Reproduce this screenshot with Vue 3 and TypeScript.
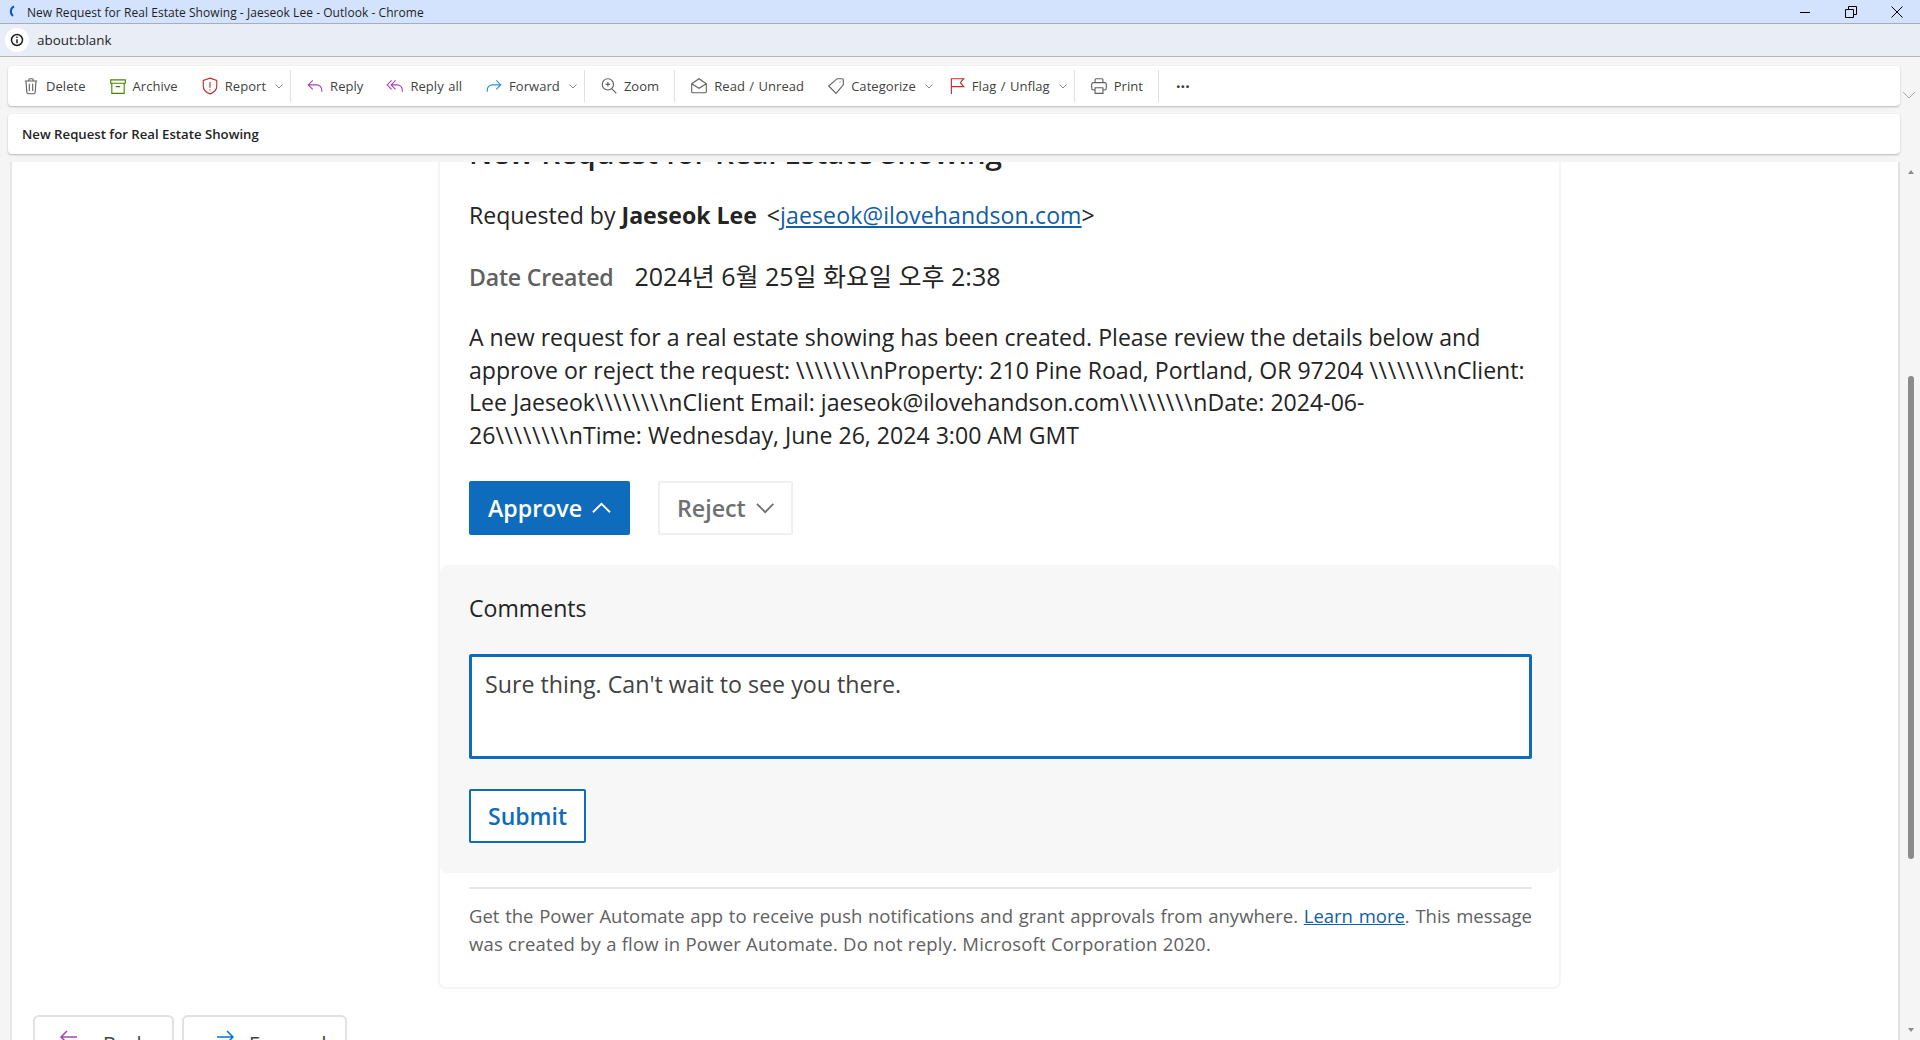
<script setup lang="ts">
import { ref } from 'vue'

interface ToolItem {
  label: string
  icon: string
  tone: string
  menu?: boolean
  sep?: boolean
}

const icons: Record<string, string> = {
  trash: 'M2.5 3.5h11M6 3.5v-1a1 1 0 0 1 1-1h2a1 1 0 0 1 1 1v1M3.5 3.5l.8 10a1.5 1.5 0 0 0 1.5 1.4h4.4a1.5 1.5 0 0 0 1.5-1.4l.8-10M6.5 6v6.5M9.5 6v6.5',
  archive: 'M1.5 2.5h13v3h-13zM2.5 5.5v9h11v-9M6 8.5h4',
  shield: 'M8 1l6 2v5c0 3.5-3 6-6 7-3-1-6-3.500-6-7V3zM8 4.500v5M8 11v1',
  reply: 'M6 3L2 7l4 4M2 7h7.500A4.500 4.500 0 0 1 14 11.500V13',
  replyAll: 'M5 3L1 7l4 4M8.500 3l-4 4 4 4M4.500 7H10a4.500 4.500 0 0 1 4.500 4.500V13',
  forward: 'M10 3l4 4-4 4M14 7H6.500A4.500 4.500 0 0 0 2 11.500V13',
  zoom: 'M7 1.500a5 5 0 1 0 0 10 5 5 0 0 0 0-10zM10.600 10.600l3.900 3.900M7 4.500v4M5 6.500h4',
  read: 'M1.500 6L8 1.500 14.500 6v7a1 1 0 0 1-1 1h-11a1 1 0 0 1-1-1zM1.500 6L8 10l6.500-4',
  tag: 'M9 1.500h4.500a1 1 0 0 1 1 1V7L8 14.500 1.500 8zM11.500 4.200v.6',
  flag: 'M3 15V1.500h11L11 5l3 3.500H3',
  print: 'M4.500 5V2.500a1 1 0 0 1 1-1h5a1 1 0 0 1 1 1V5M4.500 11.500H3A1.500 1.500 0 0 1 1.500 10V6.500A1.500 1.500 0 0 1 3 5h10a1.500 1.500 0 0 1 1.500 1.500V10a1.500 1.500 0 0 1-1.500 1.500h-1.500M4.500 9.500h7v5h-7z',
}

const tools: ToolItem[] = [
  { label: 'Delete', icon: 'trash', tone: 'grey' },
  { label: 'Archive', icon: 'archive', tone: 'green' },
  { label: 'Report', icon: 'shield', tone: 'red', menu: true, sep: true },
  { label: 'Reply', icon: 'reply', tone: 'purple' },
  { label: 'Reply all', icon: 'replyAll', tone: 'purple' },
  { label: 'Forward', icon: 'forward', tone: 'blue', menu: true, sep: true },
  { label: 'Zoom', icon: 'zoom', tone: 'grey', sep: true },
  { label: 'Read / Unread', icon: 'read', tone: 'grey' },
  { label: 'Categorize', icon: 'tag', tone: 'grey', menu: true },
  { label: 'Flag / Unflag', icon: 'flag', tone: 'red', menu: true, sep: true },
  { label: 'Print', icon: 'print', tone: 'grey', sep: true },
]

const slashes = '\\\\\\\\\\\\\\\\'
const comment = ref("Sure thing. Can't wait to see you there.")
</script>

<template>
  <div class="window">
    <header class="titlebar">
      <svg class="spinner" width="10" height="14" viewBox="0 0 10 14"><path d="M7 1.500C3.500 3 2.500 8 6 11" /></svg>
      <span class="title">New Request for Real Estate Showing - Jaeseok Lee - Outlook - Chrome</span>
      <div class="win-buttons">
        <svg width="14" height="14" viewBox="0 0 14 14"><path d="M2 7.500h10" /></svg>
        <svg width="14" height="14" viewBox="0 0 14 14"><path d="M1.500 4.500h8v8h-8zM4.500 4.500v-3h8v8h-3" /></svg>
        <svg width="14" height="14" viewBox="0 0 14 14"><path d="M1.500 1.500l11 11M12.500 1.500l-11 11" /></svg>
      </div>
    </header>

    <div class="addressbar">
      <span class="info">
        <svg width="14" height="14" viewBox="0 0 14 14"><circle cx="7" cy="7" r="5.500" /><path d="M7 6.200v4M7 3.600v1.400" /></svg>
      </span>
      <span class="url">about:blank</span>
    </div>

    <main class="app">
      <div class="bar-row">
        <nav class="card toolbar">
          <template v-for="tool in tools" :key="tool.label">
            <div class="tool">
              <svg :class="['tool-icon', tool.tone]" width="18" height="18" viewBox="0 0 16 16"><path :d="icons[tool.icon]" /></svg>
              <span>{{ tool.label }}</span>
              <svg v-if="tool.menu" class="caret" width="8" height="8" viewBox="0 0 8 8"><path d="M.5 2.500L4 6l3.500-3.500" /></svg>
            </div>
            <i v-if="tool.sep" class="sep"></i>
          </template>
          <div class="more">···</div>
        </nav>
        <svg class="bar-caret" width="14" height="8" viewBox="0 0 14 8"><path d="M1 1l6 6 6-6" /></svg>
      </div>

      <div class="card subject">New Request for Real Estate Showing</div>

      <div class="reading">
        <div class="pane">
          <article class="mail">
            <section class="mail-body">
              <h1>New Request for Real Estate Showing</h1>
              <p class="line">Requested by <b>Jaeseok Lee</b> &lt;<a href="#">jaeseok@ilovehandson.com</a>&gt;</p>
              <p class="line date-line"><b class="muted">Date Created</b><span class="date">2024년 6월 25일 화요일 오후 2:38</span></p>
              <p class="desc">A new request for a real estate showing has been created. Please review the details below and approve or reject the request: <span class="bs">{{ slashes }}</span>nProperty: 210 Pine Road, Portland, OR 97204 <span class="bs">{{ slashes }}</span>nClient: Lee Jaeseok<span class="bs">{{ slashes }}</span>nClient Email: jaeseok@ilovehandson.com<span class="bs">{{ slashes }}</span>nDate: 2024-06-<br />26<span class="bs">{{ slashes }}</span>nTime: Wednesday, June 26, 2024 3:00 AM GMT</p>
              <div class="actions">
                <button class="btn primary">
                  Approve
                  <svg width="20" height="12" viewBox="0 0 20 12"><path d="M1 10.500l9-9 9 9" /></svg>
                </button>
                <button class="btn ghost">
                  Reject
                  <svg width="20" height="12" viewBox="0 0 20 12"><path d="M1 1.500l9 9 9-9" /></svg>
                </button>
              </div>
            </section>

            <section class="panel">
              <label for="comment">Comments</label>
              <textarea id="comment" v-model="comment" rows="2"></textarea>
              <button class="btn submit">Submit</button>
            </section>

            <footer class="mail-foot">
              Get the Power Automate app to receive push notifications and grant approvals from anywhere. <a href="#">Learn more</a>. This message <span class="foot-tail">was created by a flow in Power Automate. Do not reply. Microsoft Corporation 2020.</span>
            </footer>
          </article>

          <div class="nav-buttons">
            <button class="nav-btn back">
              <svg width="20" height="16" viewBox="0 0 20 16"><path d="M8 1L2 7l6 6M2 7h16" /></svg>
              Back
            </button>
            <button class="nav-btn fwd">
              <svg width="20" height="16" viewBox="0 0 20 16"><path d="M12 1l6 6-6 6M18 7H2" /></svg>
              Forward
            </button>
          </div>
        </div>

        <div class="scrollbar">
          <i class="arrow up"></i>
          <i class="thumb"></i>
          <i class="arrow down"></i>
        </div>
      </div>
    </main>
  </div>
</template>

<style>
html,
body {
  margin: 0;
  overflow: hidden;
}
</style>

<style scoped>
.window {
  display: flex;
  flex-direction: column;
  height: 1040px;
  overflow: hidden;
  font-family: 'Open Sans', 'Noto Sans CJK KR', sans-serif;
  color: #242424;
}

.titlebar {
  flex: none;
  display: flex;
  align-items: center;
  height: 22px;
  padding: 1px 0 0 7px;
  background: #d3e3fd;
  border-bottom: 1px solid #a8adb6;
  font-size: 12px;
  color: #1f1f1f;
}
.spinner {
  fill: none;
  stroke: #0b57d0;
  stroke-width: 2;
}
.title {
  margin-left: 10px;
  letter-spacing: 0.05px;
}
.win-buttons {
  margin-left: auto;
  display: flex;
  gap: 32px;
  padding-right: 16px;
}
.win-buttons svg {
  fill: none;
  stroke: #000;
}

.addressbar {
  flex: none;
  display: flex;
  align-items: center;
  height: 32px;
  padding-left: 5px;
  background: #e9edf6;
  border-bottom: 1px solid #b4b6ba;
  font-size: 13.400px;
  color: #1f1f1f;
}
.info {
  display: flex;
  align-items: center;
  justify-content: center;
  width: 24px;
  height: 24px;
  border-radius: 50%;
  background: #fff;
}
.info svg {
  fill: none;
  stroke: #1f1f1f;
  stroke-width: 1.500;
}
.url {
  margin-left: 8px;
}

.app {
  flex: 1;
  min-height: 0;
  display: flex;
  flex-direction: column;
  padding-top: 9px;
  background: #f5f5f5;
}
.card {
  background: #fff;
  border-radius: 4px;
  box-shadow: 0 1px 2px rgba(0, 0, 0, 0.25);
}
.bar-row {
  flex: none;
  display: flex;
  align-items: center;
  padding-left: 8px;
}
.toolbar {
  display: flex;
  align-items: center;
  width: 1892px;
  height: 40px;
  box-sizing: border-box;
  padding-left: 3px;
  font-size: 13px;
  letter-spacing: 0.05px;
  word-spacing: 1px;
  color: #424242;
}
.bar-caret {
  margin: 18px 0 0 2px;
  fill: none;
  stroke: #a6a6a6;
}
.tool {
  display: flex;
  align-items: center;
  gap: 6px;
  padding: 0 12px 0 11px;
  white-space: nowrap;
}
.tool-icon {
  fill: none;
  stroke-width: 1;
}
.grey { stroke: #616161; }
.green { stroke: #498205; }
.red { stroke: #bc2f32; }
.purple { stroke: #a347b5; }
.blue { stroke: #2c8fe0; }
.caret {
  margin-left: 3px;
  margin-right: -8px;
  fill: none;
  stroke: #8a8a8a;
}
.sep {
  width: 1px;
  height: 32px;
  margin: 0 4px 0 3px;
  background: #e0e0e0;
}
.more {
  padding-left: 13px;
  font-size: 16px;
  font-weight: 700;
}
.subject {
  flex: none;
  width: 1892px;
  height: 40px;
  box-sizing: border-box;
  margin: 8px 0 8px 8px;
  padding-left: 14px;
  font-size: 13.200px;
  font-weight: 600;
  line-height: 40px;
  color: #242424;
}

.reading {
  flex: 1;
  min-height: 0;
  display: flex;
  padding-left: 10px;
}
.pane {
  flex: 1;
  min-width: 0;
  overflow: hidden;
  background: #fff;
  border-left: 2px solid #e6e6e6;
  border-right: 2px solid #e2e2e2;
}
.mail {
  width: 1123px;
  box-sizing: border-box;
  margin: -32px 0 0 426px;
  background: #fff;
  border: 2px solid #f5f5f5;
  border-radius: 8px;
}
.mail-body {
  padding: 0 27px 30px 29px;
  font-size: 23.100px;
  color: #242424;
}
h1 {
  margin: 0 0 25px;
  font-size: 29.700px;
  font-weight: 600;
  line-height: 42px;
}
.line {
  margin: 0 0 29px;
  line-height: 33px;
}
.line a {
  letter-spacing: 0.1px;
}
.date-line {
  margin-bottom: 27px;
}
.muted {
  color: #616161;
  font-weight: 600;
}
.line b {
  font-weight: 700;
  margin-right: 4px;
}
.line .muted {
  font-weight: 600;
  margin-right: 0;
  letter-spacing: -0.2px;
}
.date {
  margin-left: 21px;
  font-size: 25px;
  line-height: 1;
}
.desc {
  margin: 0 0 29px;
  line-height: 32.700px;
}
.bs {
  letter-spacing: 0.7px;
}
a {
  color: #115ea3;
}
.actions {
  display: flex;
  gap: 28px;
}
.btn {
  display: inline-flex;
  align-items: center;
  gap: 10px;
  height: 54px;
  box-sizing: border-box;
  padding: 0 19px;
  border-radius: 2px;
  font-family: inherit;
  font-size: 23.200px;
  font-weight: 600;
}
.btn svg {
  fill: none;
  stroke: currentColor;
  stroke-width: 2;
}
.primary {
  width: 161px;
  border: none;
  background: #0f6cbd;
  color: #fff;
}
.ghost {
  width: 135px;
  padding: 0 17px;
  border: 2px solid #f0f0f0;
  background: #fff;
  color: #707070;
}
.panel {
  display: flex;
  flex-direction: column;
  padding: 24px 27px 30px 29px;
  background: #f7f7f7;
  border-radius: 8px;
  font-size: 23.100px;
}
label {
  line-height: 38px;
}
textarea {
  height: 105px;
  box-sizing: border-box;
  margin-top: 27px;
  padding: 11px 13px;
  border: 3px solid #0f6cbd;
  border-radius: 2px;
  outline: none;
  resize: none;
  font-family: inherit;
  font-size: 23.200px;
  line-height: 32px;
  color: #424242;
  background: #fff;
}
.submit {
  align-self: flex-start;
  margin-top: 30px;
  padding: 0 17px;
  border: 2px solid #0f6cbd;
  background: #fff;
  color: #0f6cbd;
  font-size: 23px;
}
.mail-foot {
  margin: 14px 27px 0 29px;
  padding: 13px 0 29px;
  border-top: 2px solid #e6e6e6;
  font-size: 18.500px;
  line-height: 28px;
  text-align: justify;
  color: #616161;
}
.foot-tail {
  letter-spacing: 0.22px;
}
.nav-buttons {
  display: flex;
  gap: 8px;
  margin: 26px 0 0 21px;
}
.nav-btn {
  display: flex;
  align-items: center;
  flex: none;
  gap: 24px;
  width: 141px;
  height: 58px;
  box-sizing: border-box;
  padding: 0 0 0 24px;
  background: #fff;
  border: 2px solid #e1e1e1;
  border-radius: 6px;
  font-family: inherit;
  font-size: 20px;
  color: #424242;
}
.fwd {
  width: 165px;
  gap: 14px;
  padding-left: 31px;
}
.nav-btn svg {
  margin-bottom: 12px;
  fill: none;
  stroke-width: 1.500;
}
.back svg { stroke: #a347b5; }
.fwd svg { stroke: #0078d4; }

.scrollbar {
  flex: none;
  position: relative;
  width: 20px;
}
.thumb {
  position: absolute;
  left: 8px;
  top: 214px;
  width: 6px;
  height: 483px;
  border-radius: 3px;
  background: #8b8b8b;
}
.arrow {
  position: absolute;
  left: 8px;
  border-left: 3px solid transparent;
  border-right: 3px solid transparent;
}
.up {
  top: 8px;
  border-bottom: 4px solid #8b8b8b;
}
.down {
  bottom: 8px;
  border-top: 4px solid #8b8b8b;
}
</style>
